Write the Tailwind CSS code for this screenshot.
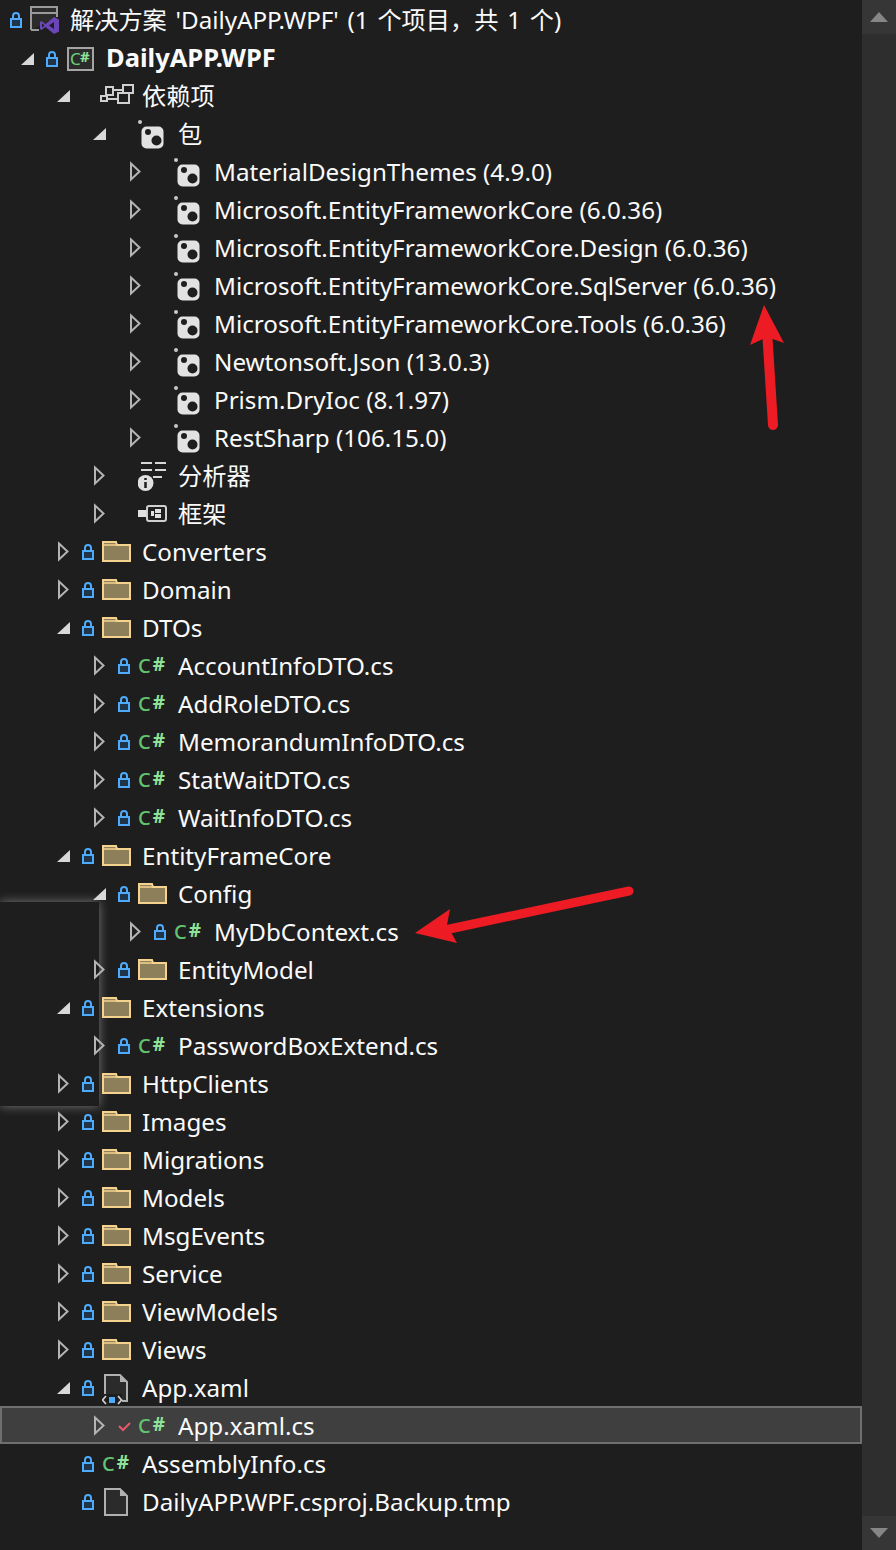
<!DOCTYPE html>
<html lang="zh-CN">
<head>
  <meta charset="UTF-8">
  <title>Solution Explorer</title>
  <script src="https://cdn.jsdelivr.net/npm/@tailwindcss/browser@4"></script>
</head>
<body class="bg-[#1e1e1e]">
  <!-- icon set, every symbol is drawn on a row-height canvas -->
  <svg class="hidden">
    <symbol id="open" viewBox="0 0 20 38"><polygon points="17,14 17,26 4,26" fill="#d8d8d8"/></symbol>
    <symbol id="shut" viewBox="0 0 20 38"><polygon points="6,11.5 14.5,19.5 6,27.5" fill="none" stroke="#b4b4b4" stroke-width="2"/></symbol>
    <symbol id="lock" viewBox="0 0 20 38">
      <path d="M7 18.5v-2.5a3 3 0 0 1 6 0v2.5" fill="none" stroke="#4daafc" stroke-width="2"/>
      <rect x="5" y="19" width="10" height="8" fill="#1f3447" stroke="#4daafc" stroke-width="2"/>
    </symbol>
    <symbol id="check" viewBox="0 0 20 38"><path d="M5 20l4 4 7-7" fill="none" stroke="#e45a6c" stroke-width="2"/></symbol>
    <symbol id="folder" viewBox="0 0 30 38">
      <path d="M1 10h13l1 3h13v16H1z" fill="#8e7f5b" stroke="#f5d38e" stroke-width="2"/>
      <path d="M1 13h14" stroke="#f5d38e" stroke-width="1.5"/>
    </symbol>
    <symbol id="pkg" viewBox="0 0 30 38">
      <circle cx="2" cy="8" r="2" fill="#c8c8c8"/>
      <rect x="3.500" y="12.500" width="22" height="22" rx="5" fill="#e2e2e2"/>
      <circle cx="10" cy="18" r="3" fill="#1e1e1e"/>
      <circle cx="18.500" cy="26.500" r="5" fill="#1e1e1e"/>
    </symbol>
    <symbol id="file" viewBox="0 0 30 38">
      <path d="M3 7h15l7 7v19H3z" fill="#2b2b2b" stroke="#b0b0b0" stroke-width="2"/>
      <path d="M18 7v7h7z" fill="#b0b0b0"/>
    </symbol>
  </svg>

  <div class="relative h-[1550px] w-[896px] overflow-hidden font-['Noto_Sans','Noto_Sans_CJK_SC',sans-serif] text-[24.2px] text-[#fafafa]">
    <!-- shadow of a popup behind the tree -->
    <div class="absolute left-0 top-[902px] h-[204px] w-[99px] bg-[#1e1e1e] shadow-[0_0_10px_rgba(255,255,255,0.4)]"></div>

    <!-- scrollbar -->
    <div class="absolute right-0 top-0 flex h-full w-[34px] flex-col justify-between bg-[#2e2e2e]">
      <div class="flex h-[34px] items-center justify-center bg-[#363636]"><svg width="18" height="10"><polygon points="9,0 18,10 0,10" fill="#868686"/></svg></div>
      <div class="flex h-[34px] items-center justify-center bg-[#363636]"><svg width="18" height="10"><polygon points="0,0 18,0 9,10" fill="#868686"/></svg></div>
    </div>

    <div class="relative w-[862px] [&>div>span:last-child]:-ml-[1px] [&>div>span:last-child]:pt-[2px]">
      <!-- solution -->
      <div class="grid h-[38px] grid-cols-[6px_24px_41px_1fr] items-center whitespace-nowrap">
        <span></span>
        <svg class="h-[38px] w-5"><use href="#lock"/></svg>
        <svg class="h-[38px] w-[30px]" viewBox="0 0 30 38">
          <path d="M1 30V7h26v10M1 30h8" fill="#2b2b2b" stroke="#9a9a9a" stroke-width="2"/>
          <path d="M1 13h26" stroke="#9a9a9a" stroke-width="2"/>
          <path fill-rule="evenodd" d="M24 17l5 2.500v12L24 34l-8.500-7-4 3L10 29v-7l1.500-1 4 3zM24 22l-5 3.500 5 3.500zM12 23.500v4l2.500-2z" fill="#6a46b8"/>
        </svg>
        <span class="[word-spacing:2.5px]">解决方案 'DailyAPP.WPF' (1 个项目，共 1 个)</span>
      </div>

      <!-- project -->
      <div class="grid h-[38px] grid-cols-[25px_24px_41px_1fr] items-center whitespace-nowrap pl-[17px]">
        <svg class="h-[38px] w-5"><use href="#open"/></svg>
        <svg class="h-[38px] w-5"><use href="#lock"/></svg>
        <svg class="h-[38px] w-[30px]" viewBox="0 0 30 38">
          <rect x="2" y="9" width="25" height="22" fill="#2b2b2b" stroke="#a5a5a5" stroke-width="2"/>
          <text x="4" y="26" font-family="Noto Sans" font-size="17" fill="#6cd07a">C</text>
          <text x="14" y="23" font-family="Noto Sans" font-size="15" font-weight="700" fill="#8de39a">#</text>
        </svg>
        <span class="relative -top-[2px] text-[25.5px] font-bold">DailyAPP.WPF</span>
      </div>

      <!-- dependencies -->
      <div class="grid h-[38px] grid-cols-[25px_24px_41px_1fr] items-center whitespace-nowrap pl-[53px]">
        <svg class="h-[38px] w-5"><use href="#open"/></svg>
        <span></span>
        <svg class="h-[38px] w-[34px] -ml-[2px]" viewBox="0 0 34 38">
          <g fill="none" stroke="#d0d0d0" stroke-width="2">
            <rect x="1" y="20" width="6" height="5"/>
            <rect x="6" y="11" width="7" height="8"/>
            <rect x="23" y="9" width="10" height="8"/>
            <rect x="18" y="17" width="11" height="10"/>
            <path d="M13 14h10M7 23h11"/>
          </g>
        </svg>
        <span>依赖项</span>
      </div>

      <!-- packages -->
      <div class="grid h-[38px] grid-cols-[25px_24px_41px_1fr] items-center whitespace-nowrap pl-[89px]">
        <svg class="h-[38px] w-5"><use href="#open"/></svg><span></span>
        <svg class="h-[38px] w-[30px]"><use href="#pkg"/></svg><span>包</span>
      </div>
      <div class="grid h-[38px] grid-cols-[25px_24px_41px_1fr] items-center whitespace-nowrap pl-[125px]">
        <svg class="h-[38px] w-5"><use href="#shut"/></svg><span></span>
        <svg class="h-[38px] w-[30px]"><use href="#pkg"/></svg><span>MaterialDesignThemes (4.9.0)</span>
      </div>
      <div class="grid h-[38px] grid-cols-[25px_24px_41px_1fr] items-center whitespace-nowrap pl-[125px]">
        <svg class="h-[38px] w-5"><use href="#shut"/></svg><span></span>
        <svg class="h-[38px] w-[30px]"><use href="#pkg"/></svg><span>Microsoft.EntityFrameworkCore (6.0.36)</span>
      </div>
      <div class="grid h-[38px] grid-cols-[25px_24px_41px_1fr] items-center whitespace-nowrap pl-[125px]">
        <svg class="h-[38px] w-5"><use href="#shut"/></svg><span></span>
        <svg class="h-[38px] w-[30px]"><use href="#pkg"/></svg><span>Microsoft.EntityFrameworkCore.Design (6.0.36)</span>
      </div>
      <div class="grid h-[38px] grid-cols-[25px_24px_41px_1fr] items-center whitespace-nowrap pl-[125px]">
        <svg class="h-[38px] w-5"><use href="#shut"/></svg><span></span>
        <svg class="h-[38px] w-[30px]"><use href="#pkg"/></svg><span>Microsoft.EntityFrameworkCore.SqlServer (6.0.36)</span>
      </div>
      <div class="grid h-[38px] grid-cols-[25px_24px_41px_1fr] items-center whitespace-nowrap pl-[125px]">
        <svg class="h-[38px] w-5"><use href="#shut"/></svg><span></span>
        <svg class="h-[38px] w-[30px]"><use href="#pkg"/></svg><span>Microsoft.EntityFrameworkCore.Tools (6.0.36)</span>
      </div>
      <div class="grid h-[38px] grid-cols-[25px_24px_41px_1fr] items-center whitespace-nowrap pl-[125px]">
        <svg class="h-[38px] w-5"><use href="#shut"/></svg><span></span>
        <svg class="h-[38px] w-[30px]"><use href="#pkg"/></svg><span>Newtonsoft.Json (13.0.3)</span>
      </div>
      <div class="grid h-[38px] grid-cols-[25px_24px_41px_1fr] items-center whitespace-nowrap pl-[125px]">
        <svg class="h-[38px] w-5"><use href="#shut"/></svg><span></span>
        <svg class="h-[38px] w-[30px]"><use href="#pkg"/></svg><span>Prism.DryIoc (8.1.97)</span>
      </div>
      <div class="grid h-[38px] grid-cols-[25px_24px_41px_1fr] items-center whitespace-nowrap pl-[125px]">
        <svg class="h-[38px] w-5"><use href="#shut"/></svg><span></span>
        <svg class="h-[38px] w-[30px]"><use href="#pkg"/></svg><span>RestSharp (106.15.0)</span>
      </div>

      <!-- analyzers, frameworks -->
      <div class="grid h-[38px] grid-cols-[25px_24px_41px_1fr] items-center whitespace-nowrap pl-[89px]">
        <svg class="h-[38px] w-5"><use href="#shut"/></svg><span></span>
        <svg class="h-[38px] w-[30px]" viewBox="0 0 30 38">
          <path d="M3 7h11M17 7h11M3 14h11M17 14h11M15 21h9" stroke="#d8d8d8" stroke-width="2"/>
          <circle cx="7.500" cy="27" r="8" fill="#e0e0e0"/>
          <path d="M7.500 26v6M7.500 22v2" stroke="#1e1e1e" stroke-width="2.500"/>
        </svg>
        <span>分析器</span>
      </div>
      <div class="grid h-[38px] grid-cols-[25px_24px_41px_1fr] items-center whitespace-nowrap pl-[89px]">
        <svg class="h-[38px] w-5"><use href="#shut"/></svg><span></span>
        <svg class="h-[38px] w-[30px]" viewBox="0 0 30 38">
          <rect x="0" y="16" width="8" height="7" fill="#e0e0e0"/>
          <rect x="9" y="12" width="19" height="15" rx="2" fill="none" stroke="#d0d0d0" stroke-width="2"/>
          <rect x="17" y="15" width="6" height="4" fill="#e0e0e0"/>
          <rect x="17" y="20" width="6" height="4" fill="#e0e0e0"/>
          <rect x="13" y="17" width="3" height="5" fill="#e0e0e0"/>
        </svg>
        <span>框架</span>
      </div>

      <!-- folders -->
      <div class="grid h-[38px] grid-cols-[25px_24px_41px_1fr] items-center whitespace-nowrap pl-[53px]">
        <svg class="h-[38px] w-5"><use href="#shut"/></svg><svg class="h-[38px] w-5"><use href="#lock"/></svg>
        <svg class="h-[38px] w-[30px]"><use href="#folder"/></svg><span>Converters</span>
      </div>
      <div class="grid h-[38px] grid-cols-[25px_24px_41px_1fr] items-center whitespace-nowrap pl-[53px]">
        <svg class="h-[38px] w-5"><use href="#shut"/></svg><svg class="h-[38px] w-5"><use href="#lock"/></svg>
        <svg class="h-[38px] w-[30px]"><use href="#folder"/></svg><span>Domain</span>
      </div>
      <div class="grid h-[38px] grid-cols-[25px_24px_41px_1fr] items-center whitespace-nowrap pl-[53px]">
        <svg class="h-[38px] w-5"><use href="#open"/></svg><svg class="h-[38px] w-5"><use href="#lock"/></svg>
        <svg class="h-[38px] w-[30px]"><use href="#folder"/></svg><span>DTOs</span>
      </div>
      <div class="grid h-[38px] grid-cols-[25px_24px_41px_1fr] items-center whitespace-nowrap pl-[89px]">
        <svg class="h-[38px] w-5"><use href="#shut"/></svg><svg class="h-[38px] w-5"><use href="#lock"/></svg>
        <span class="flex h-[38px] items-start"><span class="text-[20px] font-medium leading-[40px] text-[#62c46e]">C</span><span class="ml-[2px] text-[19px] font-bold leading-[36px] text-[#8de39a]">#</span></span><span>AccountInfoDTO.cs</span>
      </div>
      <div class="grid h-[38px] grid-cols-[25px_24px_41px_1fr] items-center whitespace-nowrap pl-[89px]">
        <svg class="h-[38px] w-5"><use href="#shut"/></svg><svg class="h-[38px] w-5"><use href="#lock"/></svg>
        <span class="flex h-[38px] items-start"><span class="text-[20px] font-medium leading-[40px] text-[#62c46e]">C</span><span class="ml-[2px] text-[19px] font-bold leading-[36px] text-[#8de39a]">#</span></span><span>AddRoleDTO.cs</span>
      </div>
      <div class="grid h-[38px] grid-cols-[25px_24px_41px_1fr] items-center whitespace-nowrap pl-[89px]">
        <svg class="h-[38px] w-5"><use href="#shut"/></svg><svg class="h-[38px] w-5"><use href="#lock"/></svg>
        <span class="flex h-[38px] items-start"><span class="text-[20px] font-medium leading-[40px] text-[#62c46e]">C</span><span class="ml-[2px] text-[19px] font-bold leading-[36px] text-[#8de39a]">#</span></span><span>MemorandumInfoDTO.cs</span>
      </div>
      <div class="grid h-[38px] grid-cols-[25px_24px_41px_1fr] items-center whitespace-nowrap pl-[89px]">
        <svg class="h-[38px] w-5"><use href="#shut"/></svg><svg class="h-[38px] w-5"><use href="#lock"/></svg>
        <span class="flex h-[38px] items-start"><span class="text-[20px] font-medium leading-[40px] text-[#62c46e]">C</span><span class="ml-[2px] text-[19px] font-bold leading-[36px] text-[#8de39a]">#</span></span><span>StatWaitDTO.cs</span>
      </div>
      <div class="grid h-[38px] grid-cols-[25px_24px_41px_1fr] items-center whitespace-nowrap pl-[89px]">
        <svg class="h-[38px] w-5"><use href="#shut"/></svg><svg class="h-[38px] w-5"><use href="#lock"/></svg>
        <span class="flex h-[38px] items-start"><span class="text-[20px] font-medium leading-[40px] text-[#62c46e]">C</span><span class="ml-[2px] text-[19px] font-bold leading-[36px] text-[#8de39a]">#</span></span><span>WaitInfoDTO.cs</span>
      </div>
      <div class="grid h-[38px] grid-cols-[25px_24px_41px_1fr] items-center whitespace-nowrap pl-[53px]">
        <svg class="h-[38px] w-5"><use href="#open"/></svg><svg class="h-[38px] w-5"><use href="#lock"/></svg>
        <svg class="h-[38px] w-[30px]"><use href="#folder"/></svg><span>EntityFrameCore</span>
      </div>
      <div class="grid h-[38px] grid-cols-[25px_24px_41px_1fr] items-center whitespace-nowrap pl-[89px]">
        <svg class="h-[38px] w-5"><use href="#open"/></svg><svg class="h-[38px] w-5"><use href="#lock"/></svg>
        <svg class="h-[38px] w-[30px]"><use href="#folder"/></svg><span>Config</span>
      </div>
      <div class="grid h-[38px] grid-cols-[25px_24px_41px_1fr] items-center whitespace-nowrap pl-[125px]">
        <svg class="h-[38px] w-5"><use href="#shut"/></svg><svg class="h-[38px] w-5"><use href="#lock"/></svg>
        <span class="flex h-[38px] items-start"><span class="text-[20px] font-medium leading-[40px] text-[#62c46e]">C</span><span class="ml-[2px] text-[19px] font-bold leading-[36px] text-[#8de39a]">#</span></span><span>MyDbContext.cs</span>
      </div>
      <div class="grid h-[38px] grid-cols-[25px_24px_41px_1fr] items-center whitespace-nowrap pl-[89px]">
        <svg class="h-[38px] w-5"><use href="#shut"/></svg><svg class="h-[38px] w-5"><use href="#lock"/></svg>
        <svg class="h-[38px] w-[30px]"><use href="#folder"/></svg><span>EntityModel</span>
      </div>
      <div class="grid h-[38px] grid-cols-[25px_24px_41px_1fr] items-center whitespace-nowrap pl-[53px]">
        <svg class="h-[38px] w-5"><use href="#open"/></svg><svg class="h-[38px] w-5"><use href="#lock"/></svg>
        <svg class="h-[38px] w-[30px]"><use href="#folder"/></svg><span>Extensions</span>
      </div>
      <div class="grid h-[38px] grid-cols-[25px_24px_41px_1fr] items-center whitespace-nowrap pl-[89px]">
        <svg class="h-[38px] w-5"><use href="#shut"/></svg><svg class="h-[38px] w-5"><use href="#lock"/></svg>
        <span class="flex h-[38px] items-start"><span class="text-[20px] font-medium leading-[40px] text-[#62c46e]">C</span><span class="ml-[2px] text-[19px] font-bold leading-[36px] text-[#8de39a]">#</span></span><span>PasswordBoxExtend.cs</span>
      </div>
      <div class="grid h-[38px] grid-cols-[25px_24px_41px_1fr] items-center whitespace-nowrap pl-[53px]">
        <svg class="h-[38px] w-5"><use href="#shut"/></svg><svg class="h-[38px] w-5"><use href="#lock"/></svg>
        <svg class="h-[38px] w-[30px]"><use href="#folder"/></svg><span>HttpClients</span>
      </div>
      <div class="grid h-[38px] grid-cols-[25px_24px_41px_1fr] items-center whitespace-nowrap pl-[53px]">
        <svg class="h-[38px] w-5"><use href="#shut"/></svg><svg class="h-[38px] w-5"><use href="#lock"/></svg>
        <svg class="h-[38px] w-[30px]"><use href="#folder"/></svg><span>Images</span>
      </div>
      <div class="grid h-[38px] grid-cols-[25px_24px_41px_1fr] items-center whitespace-nowrap pl-[53px]">
        <svg class="h-[38px] w-5"><use href="#shut"/></svg><svg class="h-[38px] w-5"><use href="#lock"/></svg>
        <svg class="h-[38px] w-[30px]"><use href="#folder"/></svg><span>Migrations</span>
      </div>
      <div class="grid h-[38px] grid-cols-[25px_24px_41px_1fr] items-center whitespace-nowrap pl-[53px]">
        <svg class="h-[38px] w-5"><use href="#shut"/></svg><svg class="h-[38px] w-5"><use href="#lock"/></svg>
        <svg class="h-[38px] w-[30px]"><use href="#folder"/></svg><span>Models</span>
      </div>
      <div class="grid h-[38px] grid-cols-[25px_24px_41px_1fr] items-center whitespace-nowrap pl-[53px]">
        <svg class="h-[38px] w-5"><use href="#shut"/></svg><svg class="h-[38px] w-5"><use href="#lock"/></svg>
        <svg class="h-[38px] w-[30px]"><use href="#folder"/></svg><span>MsgEvents</span>
      </div>
      <div class="grid h-[38px] grid-cols-[25px_24px_41px_1fr] items-center whitespace-nowrap pl-[53px]">
        <svg class="h-[38px] w-5"><use href="#shut"/></svg><svg class="h-[38px] w-5"><use href="#lock"/></svg>
        <svg class="h-[38px] w-[30px]"><use href="#folder"/></svg><span>Service</span>
      </div>
      <div class="grid h-[38px] grid-cols-[25px_24px_41px_1fr] items-center whitespace-nowrap pl-[53px]">
        <svg class="h-[38px] w-5"><use href="#shut"/></svg><svg class="h-[38px] w-5"><use href="#lock"/></svg>
        <svg class="h-[38px] w-[30px]"><use href="#folder"/></svg><span>ViewModels</span>
      </div>
      <div class="grid h-[38px] grid-cols-[25px_24px_41px_1fr] items-center whitespace-nowrap pl-[53px]">
        <svg class="h-[38px] w-5"><use href="#shut"/></svg><svg class="h-[38px] w-5"><use href="#lock"/></svg>
        <svg class="h-[38px] w-[30px]"><use href="#folder"/></svg><span>Views</span>
      </div>

      <!-- App.xaml -->
      <div class="grid h-[38px] grid-cols-[25px_24px_41px_1fr] items-center whitespace-nowrap pl-[53px]">
        <svg class="h-[38px] w-5"><use href="#open"/></svg><svg class="h-[38px] w-5"><use href="#lock"/></svg>
        <svg class="h-[38px] w-[30px]" viewBox="0 0 30 38">
          <use href="#file" width="30" height="38"/>
          <rect x="0" y="26" width="20" height="11" fill="#1e1e1e"/>
          <path d="M4 28l-3.500 4 3.500 4M16 28l3.500 4-3.500 4" fill="none" stroke="#d0d0d0" stroke-width="1.800"/>
          <rect x="7" y="29" width="6" height="6" fill="#4daafc"/>
        </svg>
        <span>App.xaml</span>
      </div>
      <div class="grid h-[38px] grid-cols-[25px_24px_41px_1fr] items-center whitespace-nowrap border-2 border-[#6f6f6f] bg-[#3f3f3f] pl-[87px]">
        <svg class="h-[34px] w-5" viewBox="0 2 20 34"><use href="#shut" width="20" height="38"/></svg><svg class="h-[34px] w-5" viewBox="0 2 20 34"><use href="#check" width="20" height="38"/></svg>
        <span class="flex h-[34px] items-start"><span class="text-[20px] font-medium leading-[36px] text-[#62c46e]">C</span><span class="ml-[2px] text-[19px] font-bold leading-[32px] text-[#8de39a]">#</span></span><span class="leading-[30px]">App.xaml.cs</span>
      </div>
      <div class="grid h-[38px] grid-cols-[25px_24px_41px_1fr] items-center whitespace-nowrap pl-[53px]">
        <span></span><svg class="h-[38px] w-5"><use href="#lock"/></svg>
        <span class="flex h-[38px] items-start"><span class="text-[20px] font-medium leading-[40px] text-[#62c46e]">C</span><span class="ml-[2px] text-[19px] font-bold leading-[36px] text-[#8de39a]">#</span></span><span>AssemblyInfo.cs</span>
      </div>
      <div class="grid h-[38px] grid-cols-[25px_24px_41px_1fr] items-center whitespace-nowrap pl-[53px]">
        <span></span><svg class="h-[38px] w-5"><use href="#lock"/></svg>
        <svg class="h-[38px] w-[30px]"><use href="#file"/></svg><span>DailyAPP.WPF.csproj.Backup.tmp</span>
      </div>
    </div>

    <!-- red annotation arrows -->
    <svg class="absolute left-0 top-0" width="896" height="1550">
      <path d="M773 425L767 330" stroke="#ed1c24" stroke-width="10" stroke-linecap="round"/>
      <polygon points="764,305 784,343 767,337 750,345" fill="#ed1c24"/>
      <path d="M629 891L440 931" stroke="#ed1c24" stroke-width="9" stroke-linecap="round"/>
      <polygon points="415,933 450,909 447,925 457,943" fill="#ed1c24"/>
    </svg>
  </div>
</body>
</html>
